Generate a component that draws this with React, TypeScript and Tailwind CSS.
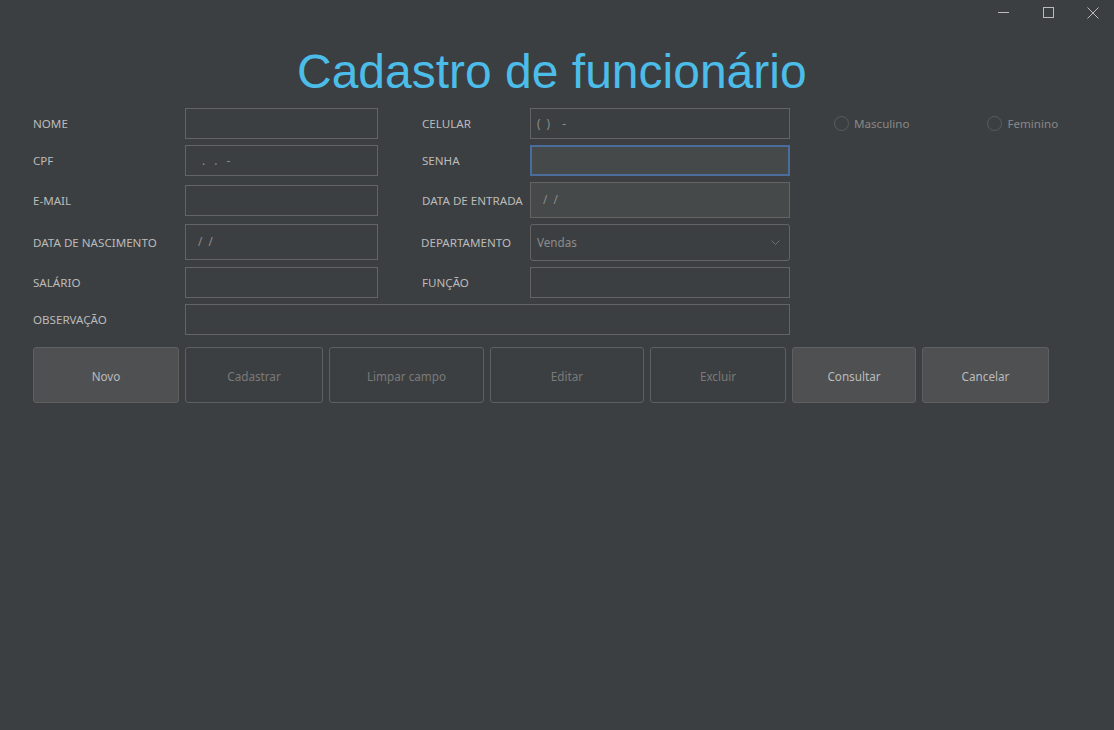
import React from 'react';

const ui = { fontFamily: '"Noto Sans", "Open Sans", sans-serif' };

function Field({ w, h = 'h-[31px]', text, tx = 'pl-[12px]', className = '' }: { w: string; h?: string; text?: string; tx?: string; className?: string }) {
  return (
    <div className={`${w} ${h} border border-[#646464] flex items-center ${tx} text-[11.7px] text-[#8c8c8c] whitespace-pre ${className}`}>
      {text}
    </div>
  );
}

function Label({ children, w }: { children: React.ReactNode; w: string }) {
  return <div className={`${w} pt-[1px] text-[11.6px] text-[#bbbbbb] whitespace-nowrap`}>{children}</div>;
}

function Radio({ label }: { label: string }) {
  return (
    <div className="flex items-center gap-[5px]">
      <span className="w-[15px] h-[15px] rounded-full border border-[#5a5d5f]" />
      <span className="text-[11.6px] text-[#888888]">{label}</span>
    </div>
  );
}

export default function App() {
  const buttons = [
    { label: 'Novo', w: 'w-[146px]', on: true },
    { label: 'Cadastrar', w: 'w-[138px]', on: false },
    { label: 'Limpar campo', w: 'w-[155px]', on: false },
    { label: 'Editar', w: 'w-[154px]', on: false },
    { label: 'Excluir', w: 'w-[136px]', on: false },
    { label: 'Consultar', w: 'w-[124px]', on: true },
    { label: 'Cancelar', w: 'w-[127px]', on: true },
  ];

  return (
    <div className="w-[1114px] h-[730px] bg-[#3c3f41] overflow-hidden" style={ui}>
      {/* barra da janela */}
      <div className="h-[25px] flex justify-end items-start pt-[7px] pr-[15px] gap-[33px]">
        <svg width="12" height="12" viewBox="0 0 12 12">
          <line x1="0" y1="5.5" x2="11" y2="5.5" stroke="#bbbbbb" strokeWidth="1" />
        </svg>
        <svg width="11" height="11" viewBox="0 0 11 11">
          <rect x="0.5" y="0.5" width="10" height="10" fill="none" stroke="#bbbbbb" strokeWidth="1" />
        </svg>
        <svg width="12" height="12" viewBox="0 0 12 12">
          <path d="M0.5 0.5 L11.5 11.5 M11.5 0.5 L0.5 11.5" stroke="#bbbbbb" strokeWidth="1" />
        </svg>
      </div>

      <div className="mt-[23px] pl-[297px] h-[48px] text-[48px] leading-[48px] text-[#4bbde8] whitespace-nowrap" style={{ fontFamily: '"Liberation Sans", Arial, sans-serif' }}>
        Cadastro de funcionário
      </div>

      <div className="mt-[12px] pl-[33px] flex flex-col gap-[6px]">
        {/* linha 1 */}
        <div className="flex items-center">
          <Label w="w-[152px]">NOME</Label>
          <Field w="w-[193px]" />
          <div className="w-[44px]" />
          <Label w="w-[108px]">CELULAR</Label>
          <Field w="w-[260px]" text="(  )    -" tx="pl-[6px]" />
          <div className="w-[44px]" />
          <Radio label="Masculino" />
          <div className="w-[78px]" />
          <Radio label="Feminino" />
        </div>

        {/* linha 2 */}
        <div className="flex items-center">
          <Label w="w-[152px]">CPF</Label>
          <Field w="w-[193px]" text="   .   .   -" tx="pl-[7px]" />
          <div className="w-[44px]" />
          <Label w="w-[108px]">SENHA</Label>
          <div className="w-[260px] h-[31px] border-2 border-[#4a6d9c] bg-[#45494a]" />
        </div>

        {/* linha 3 */}
        <div className="flex items-center h-[36px]">
          <Label w="w-[152px]">E-MAIL</Label>
          <Field w="w-[193px]" />
          <div className="w-[44px]" />
          <Label w="w-[108px]">DATA DE ENTRADA</Label>
          <Field w="w-[260px]" h="h-[36px]" text=" /  /" tx="pl-[9px]" className="bg-[#45494a]" />
        </div>

        {/* linha 4 */}
        <div className="flex items-center h-[37px]">
          <Label w="w-[152px]">DATA DE NASCIMENTO</Label>
          <Field w="w-[193px]" h="h-[36px]" text=" /  /" tx="pl-[9px]" className="self-start" />
          <div className="w-[43px]" />
          <Label w="w-[109px]">DEPARTAMENTO</Label>
          <div className="w-[260px] h-[37px] border border-[#646464] rounded-[3px] flex items-center justify-between pl-[6px] pr-[9px]">
            <span className="text-[11.7px] text-[#8c8c8c]">Vendas</span>
            <svg width="9" height="6" viewBox="0 0 9 6">
              <path d="M0.5 0.5 L4.5 4.5 L8.5 0.5" fill="none" stroke="#6e6e6e" strokeWidth="1" />
            </svg>
          </div>
        </div>

        {/* linha 5 */}
        <div className="flex items-center">
          <Label w="w-[152px]">SALÁRIO</Label>
          <Field w="w-[193px]" />
          <div className="w-[44px]" />
          <Label w="w-[108px]">FUNÇÃO</Label>
          <Field w="w-[260px]" />
        </div>

        {/* linha 6 */}
        <div className="flex items-center">
          <Label w="w-[152px]">OBSERVAÇÃO</Label>
          <Field w="w-[605px]" />
        </div>

        {/* botões */}
        <div className="mt-[6px] flex gap-[6px]">
          {buttons.map((b) => (
            <div
              key={b.label}
              className={`${b.w} h-[56px] pt-[3px] rounded-[3px] border border-[#5e6060] flex items-center justify-center text-[11.7px] ${
                b.on ? 'bg-[#4e5052] text-[#bbbbbb]' : 'text-[#7a7a7a]'
              }`}
            >
              {b.label}
            </div>
          ))}
        </div>
      </div>
    </div>
  );
}
